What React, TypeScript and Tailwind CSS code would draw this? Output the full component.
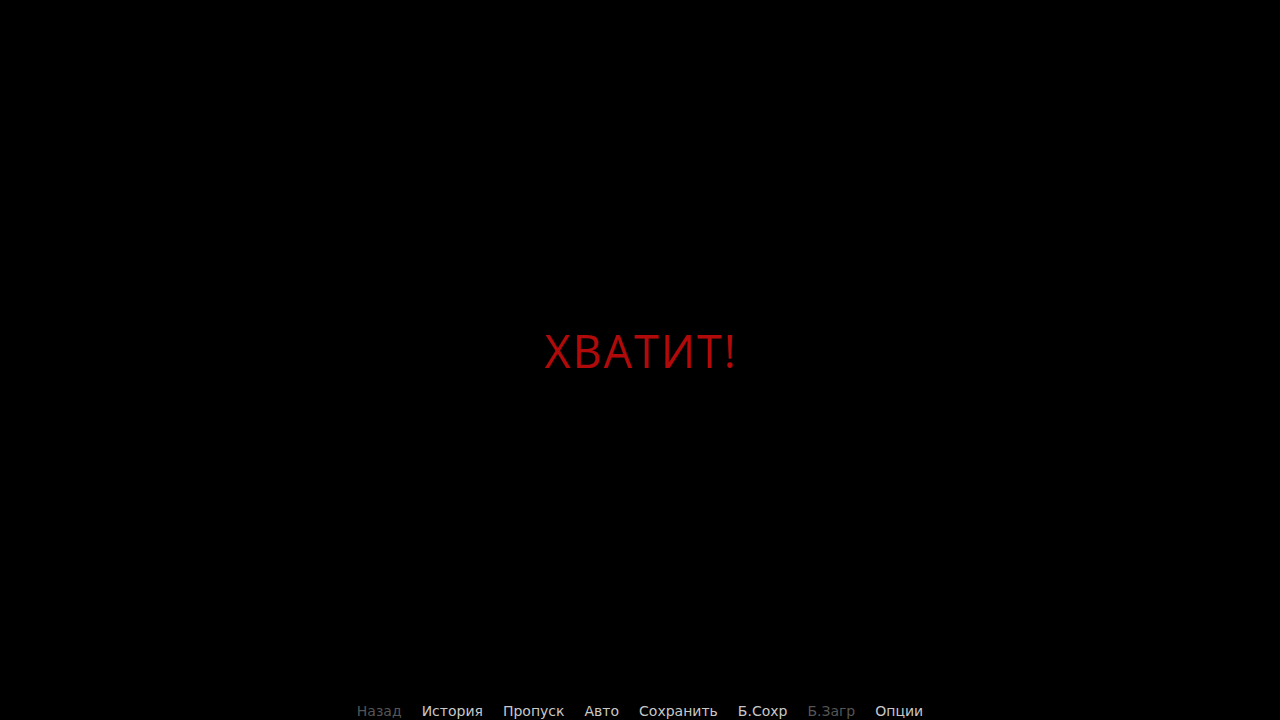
import React from 'react';

const quickMenu = [
  { label: 'Назад', active: false },
  { label: 'История', active: true },
  { label: 'Пропуск', active: true },
  { label: 'Авто', active: true },
  { label: 'Сохранить', active: true },
  { label: 'Б.Сохр', active: true },
  { label: 'Б.Загр', active: false },
  { label: 'Опции', active: true },
];

const App = () => {
  return (
    <div className="w-[1280px] h-[720px] bg-black flex flex-col overflow-hidden">
      <div className="flex-1 flex items-center justify-center">
        <span className="text-[45px] leading-none tracking-[2px] pl-[2px] text-[#b00a0a] font-['Open_Sans',sans-serif]">
          ХВАТИТ!
        </span>
      </div>
      <div className="flex justify-center gap-[20px] h-[20px] font-['DejaVu_Sans',sans-serif] text-[14px] leading-[22px]">
        {quickMenu.map((item) => (
          <button
            key={item.label}
            className={item.active ? 'text-[#c8c8c8]' : 'text-[#555555]'}
          >
            {item.label}
          </button>
        ))}
      </div>
    </div>
  );
};

export default App;
